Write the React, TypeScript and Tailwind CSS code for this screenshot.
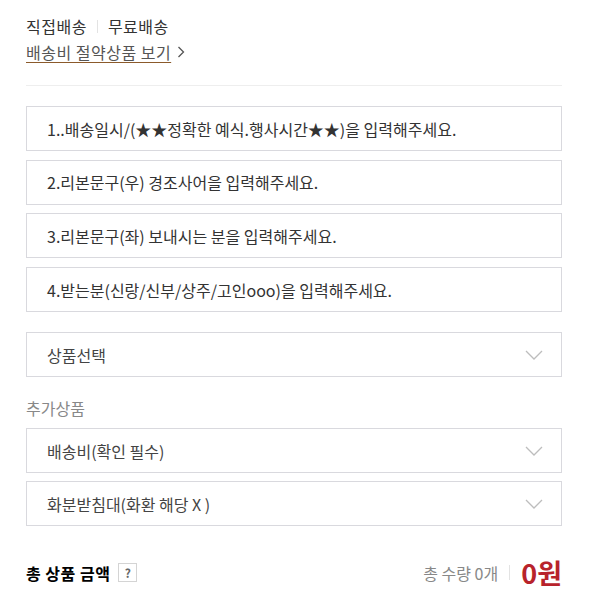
import React from 'react';

const font = { fontFamily: '"Noto Sans CJK KR", "Noto Sans", sans-serif' };

const inputs = [
  '1..배송일시/(★★정확한 예식.행사시간★★)을 입력해주세요.',
  '2.리본문구(우) 경조사어을 입력해주세요.',
  '3.리본문구(좌) 보내시는 분을 입력해주세요.',
  '4.받는분(신랑/신부/상주/고인ooo)을 입력해주세요.',
];

function Chevron() {
  return (
    <svg width="18" height="10" viewBox="0 0 18 10" fill="none">
      <path d="M1 1l8 8 8-8" stroke="#bdbdbd" strokeWidth="1.3" />
    </svg>
  );
}

function SelectBox({ label }: { label: string }) {
  return (
    <div className="flex h-[45px] items-center justify-between border border-[#d9d9de] pl-[20px] pr-[18px] text-[16px] text-[#444]">
      <span>{label}</span>
      <Chevron />
    </div>
  );
}

export default function App() {
  return (
    <div className="w-[598px] min-h-[602px] bg-white pl-[26px] pr-[36px] pt-[15px]" style={font}>
      <div className="flex items-center text-[16px] leading-[22px] tracking-[0.5px] text-[#333]">
        <span>직접배송</span>
        <span className="mx-[10px] h-[13px] w-px bg-[#e3e3e3]" />
        <span>무료배송</span>
      </div>
      <div className="mt-[4px] flex items-center text-[16px] leading-[22px] tracking-[0.5px] text-[#555]">
        <span className="underline decoration-[#8b5a2b] underline-offset-[3px]">배송비 절약상품 보기</span>
        <svg className="ml-[6px]" width="8" height="12" viewBox="0 0 8 12" fill="none">
          <path d="M1.5 1l5 5-5 5" stroke="#555" strokeWidth="1.3" />
        </svg>
      </div>
      <div className="mt-[22px] h-px bg-[#eeeeee]" />

      <div className="mt-[20px] flex flex-col gap-[8.7px]">
        {inputs.map((t) => (
          <div key={t} className="flex h-[45px] items-center border border-[#d9d9de] px-[20px] text-[16px] text-[#333]">
            {t}
          </div>
        ))}
      </div>

      <div className="mt-[20px]">
        <SelectBox label="상품선택" />
      </div>

      <div className="mt-[20px] text-[16px] leading-[22px] text-[#888]">추가상품</div>
      <div className="mt-[9px] flex flex-col gap-[8px]">
        <SelectBox label="배송비(확인 필수)" />
        <SelectBox label="화분받침대(화환 해당 X )" />
      </div>

      <div className="mt-[33px] flex items-center justify-between">
        <div className="flex items-center">
          <span className="text-[16px] font-bold tracking-[0.5px] text-black">총 상품 금액</span>
          <span className="ml-[8px] flex h-[19px] w-[19px] items-center justify-center border border-[#d4d4d4] text-[12px] font-bold text-[#666]">
            ?
          </span>
        </div>
        <div className="flex items-center">
          <span className="text-[16px] text-[#888]">총 수량 0개</span>
          <span className="mx-[11px] h-[15px] w-px bg-[#e3e3e3]" />
          <span className="text-[27px] font-bold leading-none text-[#b8232b]">0원</span>
        </div>
      </div>
    </div>
  );
}
